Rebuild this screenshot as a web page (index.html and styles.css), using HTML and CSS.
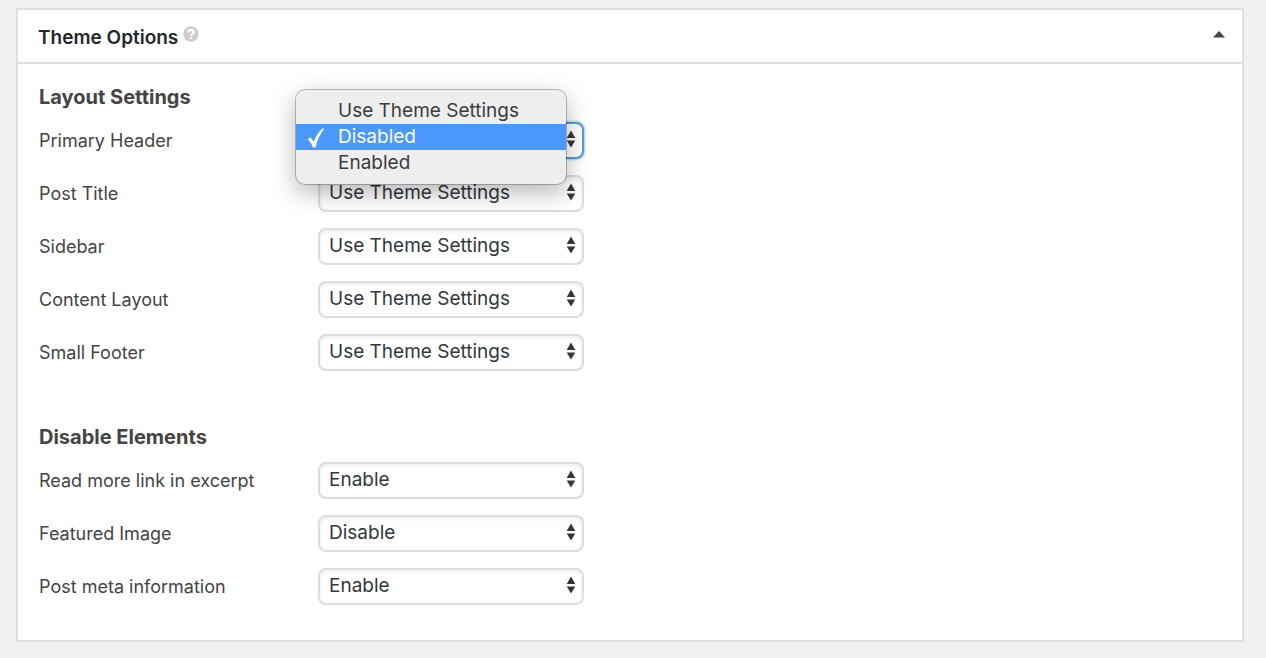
FILE: index.html
```html
<!DOCTYPE html>
<html lang="en">
<head>
<meta charset="utf-8">
<title>Theme Options</title>
<link rel="stylesheet" href="styles.css">
</head>
<body>
<svg class="sprite" aria-hidden="true">
  <symbol id="arrows" viewBox="0 0 10 18"><path d="M5 .5 9.300 8H.7ZM5 17.500 .7 10.500h8.600Z"/></symbol>
</svg>
<main class="panel">
  <header class="panel-header">
    <h2 class="panel-title">Theme Options</h2>
    <button class="icon-button" type="button" aria-label="Help">
      <svg class="help-icon" viewBox="0 0 16 16"><circle cx="8" cy="8" r="7.700"/><path d="M5.300 6.400C5.300 3.200 10.700 3.200 10.700 6.100 10.700 7.900 8 7.700 8 9.700M8 10.900v2.200"/></svg>
    </button>
    <button class="icon-button toggle" type="button" aria-label="Collapse panel" aria-expanded="true">
      <svg class="toggle-icon" viewBox="0 0 12 7"><path d="M6 0 12 6.500H0Z"/></svg>
    </button>
  </header>
  <form class="panel-body">
    <section class="group">
      <h3 class="group-title">Layout Settings</h3>
      <div class="row">
        <label class="label" for="header">Primary Header</label>
        <div class="control">
          <select class="select select-active" id="header"><option>Use Theme Settings</option><option selected>Disabled</option><option>Enabled</option></select>
          <svg class="arrows"><use href="#arrows"/></svg>
          <ul class="menu" role="listbox" aria-label="Primary Header">
            <li class="menu-item" role="option" aria-selected="false">Use Theme Settings</li>
            <li class="menu-item menu-item-active" role="option" aria-selected="true"><svg class="check" viewBox="0 0 18 20"><path d="M.5 11.300 3.600 9.300 6.700 13.800C9 8 11.800 3 15.500.4L17.300.6C13.200 6.200 10.300 12 8.500 19.400H6C4.700 16 3 13.500.5 11.300Z"/></svg>Disabled</li>
            <li class="menu-item" role="option" aria-selected="false">Enabled</li>
          </ul>
        </div>
      </div>
      <div class="row">
        <label class="label" for="title">Post Title</label>
        <div class="control"><select class="select" id="title"><option>Use Theme Settings</option><option>Disabled</option></select><svg class="arrows"><use href="#arrows"/></svg></div>
      </div>
      <div class="row">
        <label class="label" for="sidebar">Sidebar</label>
        <div class="control"><select class="select" id="sidebar"><option>Use Theme Settings</option></select><svg class="arrows"><use href="#arrows"/></svg></div>
      </div>
      <div class="row">
        <label class="label" for="content">Content Layout</label>
        <div class="control"><select class="select" id="content"><option>Use Theme Settings</option></select><svg class="arrows"><use href="#arrows"/></svg></div>
      </div>
      <div class="row">
        <label class="label" for="footer">Small Footer</label>
        <div class="control"><select class="select" id="footer"><option>Use Theme Settings</option></select><svg class="arrows"><use href="#arrows"/></svg></div>
      </div>
    </section>
    <section class="group">
      <h3 class="group-title">Disable Elements</h3>
      <div class="row">
        <label class="label" for="more">Read more link in excerpt</label>
        <div class="control"><select class="select" id="more"><option>Enable</option><option>Disable</option></select><svg class="arrows"><use href="#arrows"/></svg></div>
      </div>
      <div class="row">
        <label class="label" for="image">Featured Image</label>
        <div class="control"><select class="select" id="image"><option>Enable</option><option selected>Disable</option></select><svg class="arrows"><use href="#arrows"/></svg></div>
      </div>
      <div class="row">
        <label class="label" for="meta">Post meta information</label>
        <div class="control"><select class="select" id="meta"><option>Enable</option><option>Disable</option></select><svg class="arrows"><use href="#arrows"/></svg></div>
      </div>
    </section>
  </form>
</main>
</body>
</html>
```
FILE: styles.css
```css
* { box-sizing: border-box; }
body {
  margin: 0;
  padding: 8px 22px 16px 16px;
  background: #f0f0f0;
  color: #444;
  font: 18px/26px Inter, "Liberation Sans", sans-serif;
}
.sprite { position: absolute; width: 0; height: 0; }
.panel { background: #fff; border: 2px solid #dfdfdf; }
.panel-header {
  display: flex;
  align-items: center;
  gap: 5px;
  padding: 13px 17px 11px 20px;
  border-bottom: 2px solid #dfdfdf;
}
.panel-title { margin: 0; padding-top: 2px; color: #23282d; font-size: 19px; font-weight: 600; line-height: 26px; }
.icon-button { display: flex; padding: 0 0 6px; border: 0; background: none; }
.toggle { margin-left: auto; }
.help-icon { width: 16px; height: 16px; fill: #ccc; }
.help-icon path { fill: none; stroke: #fff; stroke-width: 2.300; }
.toggle-icon { width: 12px; height: 7px; fill: #444; }
.panel-body { display: grid; gap: 53px; padding: 20px 21px 35px; }
.group { display: grid; gap: 16px; }
.group-title { margin: 0 0 -4px; font-size: 20px; font-weight: 700; line-height: 26px; }
.row { display: grid; grid-template-columns: 279px minmax(0, 266px); align-items: center; }
.label { padding-top: 1px; }
.control { position: relative; }
.select {
  display: block;
  appearance: none;
  width: 100%;
  height: 37px;
  padding: 0 32px 1px 9px;
  border: 2px solid #ddd;
  border-radius: 8px;
  background: #fff;
  box-shadow: inset 0 2px 4px rgba(0, 0, 0, .07);
  color: #32373c;
  font: inherit;
  font-size: 19px;
}
.select-active { border-color: #5b9dd9; box-shadow: 0 0 3px rgba(30, 140, 190, .8); }
.arrows {
  position: absolute;
  top: 8px;
  right: 8px;
  width: 10px;
  height: 18px;
  fill: #32373c;
  pointer-events: none;
}
.menu {
  position: absolute;
  z-index: 1;
  top: -32px;
  left: -22px;
  width: 270px;
  margin: 0;
  padding: 8px 0;
  list-style: none;
  border-radius: 9px;
  background: #eee;
  box-shadow: 0 0 0 1px rgba(0, 0, 0, .24), 0 8px 24px rgba(0, 0, 0, .3);
  color: #3c3c3c;
  font-size: 19px;
}
.menu-item { position: relative; padding-left: 42px; }
.menu-item-active { background: #4a98fc; color: #fff; }
.check { position: absolute; top: 4px; left: 11px; width: 18px; height: 20px; fill: #fff; }
```
